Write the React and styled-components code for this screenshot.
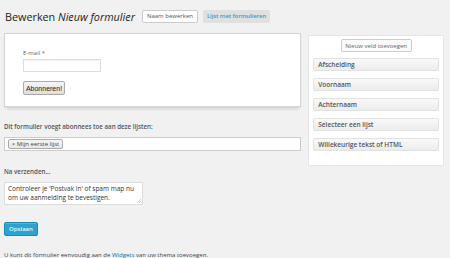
import React from "react";
import styled, { createGlobalStyle } from "styled-components";

const Global = createGlobalStyle`
  html, body { margin: 0; padding: 0; background: #f1f1f1; }
  body { font-family: "Open Sans", "Noto Sans", sans-serif; color: #444; font-size: 6px; }
  * { box-sizing: border-box; }
`;

const Page = styled.div`
  width: 450px;
  height: 258px;
  padding: 0 6px 0 4px;
  overflow: hidden;
`;

const Header = styled.div`
  display: flex;
  align-items: center;
  height: 22px;
  margin-top: 5px;
  gap: 5px;
`;

const Title = styled.h2`
  margin: 0 2px 0 1px;
  font-size: 10.8px;
  font-weight: 400;
  color: #222;
  em { font-style: italic; }
`;

const HeaderButton = styled.button`
  font-family: inherit;
  font-size: 6px;
  height: 13px;
  padding: 0 ${(p) => (p.$active ? 3 : 4)}px;
  border-radius: 2px;
  cursor: pointer;
  ${(p) =>
    p.$active
      ? `background:#e0e0e0;border:1px solid #e0e0e0;color:#2ea2cc;font-weight:600;letter-spacing:-0.1px;`
      : `background:#fff;border:1px solid #ccc;color:#555;`}
`;

const Content = styled.div`
  display: flex;
  gap: 7px;
  margin-top: 6px;
  align-items: flex-start;
`;

const Main = styled.div`
  width: 298px;
`;

const Preview = styled.div`
  position: relative;
  height: 74px;
  background: #fff;
  border: 1px solid #d4d4d4;
  box-shadow: 0 3px 4px -2px rgba(0,0,0,0.2);
  padding: 15px 18px;
  &::before, &::after {
    content: "";
    position: absolute;
    bottom: 4px;
    width: 40%;
    height: 6px;
    z-index: -1;
    box-shadow: 0 5px 5px rgba(0,0,0,0.3);
  }
  &::before { left: 8px; transform: rotate(-2deg); }
  &::after { right: 8px; transform: rotate(2deg); }
`;

const SmallLabel = styled.div`
  font-size: 6px;
  color: #666;
  margin-bottom: 2px;
`;

const EmailInput = styled.div`
  width: 78px;
  height: 13px;
  border: 1px solid #ddd;
  background: #fff;
  box-shadow: inset 0 1px 1px rgba(0,0,0,0.05);
`;

const SubmitButton = styled.button`
  margin-top: 9px;
  font-family: "Liberation Sans", sans-serif;
  font-size: 7px;
  height: 14px;
  width: 42px;
  padding: 0;
  color: #222;
  background: linear-gradient(#f6f6f6, #dedede);
  border: 1px solid #aaa;
  border-radius: 2px;
`;

const SectionLabel = styled.div`
  font-size: 6.2px;
  font-weight: 600;
  color: #555;
  margin-top: ${(p) => p.$mt}px;
`;

const SelectBox = styled.div`
  margin-top: 6px;
  height: 14px;
  background: #fff;
  border: 1px solid #ccc;
  display: flex;
  align-items: center;
  padding-left: 3px;
`;

const Tag = styled.span`
  display: inline-flex;
  align-items: center;
  gap: 2px;
  height: 10px;
  padding: 0 3px;
  border: 1px solid #aaa;
  border-radius: 2px;
  background: linear-gradient(#f4f4f4, #e8e8e8);
  font-size: 6px;
  color: #444;
  b { font-size: 5px; font-weight: 700; color: #666; }
`;

const TextArea = styled.div`
  margin-top: 6px;
  width: 139px;
  height: 23px;
  background: #fff;
  border: 1px solid #ddd;
  padding: 1px 3px;
  font-size: 6.5px;
  line-height: 9px;
  color: #333;
  position: relative;
`;

const Grip = styled.svg`
  position: absolute;
  right: 1px;
  bottom: 1px;
`;

const SaveButton = styled.button`
  display: block;
  margin-top: 17px;
  height: 14px;
  width: 34px;
  padding: 0;
  font-family: inherit;
  font-size: 6px;
  font-weight: 600;
  color: #eaf6fb;
  background: #2ea2cc;
  border: 1px solid #0e8ec0;
  border-radius: 2px;
  box-shadow: inset 0 1px 0 rgba(120,200,230,0.5);
`;

const Footer = styled.div`
  margin-top: 15px;
  font-size: 6px;
  color: #444;
  white-space: nowrap;
  a { color: #0074a2; text-decoration: underline; }
`;

const Sidebar = styled.div`
  margin-top: 2px;
  width: 136px;
  background: #fff;
  border: 1px solid #e5e5e5;
  padding: 3px 4px 14px 4px;
  display: flex;
  flex-direction: column;
  gap: 7px;
`;

const AddButton = styled.button`
  align-self: center;
  height: 13px;
  width: 71px;
  padding: 0;
  font-family: inherit;
  font-size: 6px;
  color: #666;
  background: #fafafa;
  border: 1px solid #ccc;
  border-radius: 2px;
  margin-bottom: -1px;
`;

const FieldItem = styled.div`
  height: 13px;
  display: flex;
  align-items: center;
  padding-left: 4px;
  font-size: 6.5px;
  font-weight: 600;
  color: #555;
  background: linear-gradient(#f9f9f9, #ececec);
  border: 1px solid #e2e2e2;
  border-radius: 2px;
`;

const fields = [
  "Afscheiding",
  "Voornaam",
  "Achternaam",
  "Selecteer een lijst",
  "Willekeurige tekst of HTML",
];

export default function App() {
  return (
    <>
      <Global />
      <Page>
        <Header>
          <Title>
            Bewerken <em>Nieuw formulier</em>
          </Title>
          <HeaderButton>Naam bewerken</HeaderButton>
          <HeaderButton $active>Lijst met formulieren</HeaderButton>
        </Header>
        <Content>
          <Main>
            <Preview>
              <SmallLabel>E-mail *</SmallLabel>
              <EmailInput />
              <SubmitButton>Abonneren!</SubmitButton>
            </Preview>
            <SectionLabel $mt={15}>
              Dit formulier voegt abonnees toe aan deze lijsten:
            </SectionLabel>
            <SelectBox>
              <Tag>
                <b>×</b> Mijn eerste lijst
              </Tag>
            </SelectBox>
            <SectionLabel $mt={16}>Na verzenden...</SectionLabel>
            <TextArea>
              Controleer je 'Postvak in' of spam map nu om uw aanmelding te
              bevestigen.
              <Grip width="5" height="5" viewBox="0 0 5 5">
                <path d="M1 5L5 1M3 5L5 3" stroke="#aaa" strokeWidth="0.6" />
              </Grip>
            </TextArea>
            <SaveButton>Opslaan</SaveButton>
            <Footer>
              U kunt dit formulier eenvoudig aan de <a>Widgets</a> van uw
              thema toevoegen.
            </Footer>
          </Main>
          <Sidebar>
            <AddButton>Nieuw veld toevoegen</AddButton>
            {fields.map((f) => (
              <FieldItem key={f}>{f}</FieldItem>
            ))}
          </Sidebar>
        </Content>
      </Page>
    </>
  );
}
